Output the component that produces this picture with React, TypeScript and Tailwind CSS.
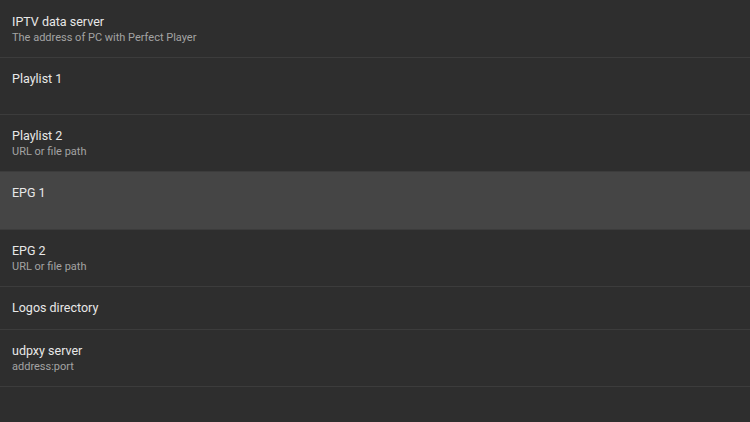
import React from 'react';

type Pref = {
  title: string;
  summary?: string;
  blank?: boolean;
  selected?: boolean;
};

const prefs: Pref[] = [
  { title: 'IPTV data server', summary: 'The address of PC with Perfect Player' },
  { title: 'Playlist 1', blank: true },
  { title: 'Playlist 2', summary: 'URL or file path' },
  { title: 'EPG 1', blank: true, selected: true },
  { title: 'EPG 2', summary: 'URL or file path' },
  { title: 'Logos directory' },
  { title: 'udpxy server', summary: 'address:port' },
];

export default function App() {
  return (
    <div
      className="w-[750px] h-[422px] bg-[#2e2e2e] overflow-hidden pt-px"
      style={{ fontFamily: 'Roboto, "Liberation Sans", sans-serif' }}
    >
      {prefs.map((p) => {
        const hasSub = p.summary || p.blank;
        const pb = p.selected ? 'pb-[13px]' : hasSub ? 'pb-[12px]' : 'pb-[13px]';
        return (
          <div key={p.title} className="border-b border-[#3c3c3c]">
            <div className={`px-3 pt-[13px] ${pb} ${p.selected ? 'bg-[#454545]' : ''}`}>
              <div className="text-[12.5px] leading-4 text-[#e8e8e8]">{p.title}</div>
              {hasSub && (
                <div className="text-[11px] leading-[14px] pt-px text-[#a3a3a3]">
                  {p.summary ?? '\u00a0'}
                </div>
              )}
            </div>
          </div>
        );
      })}
    </div>
  );
}
